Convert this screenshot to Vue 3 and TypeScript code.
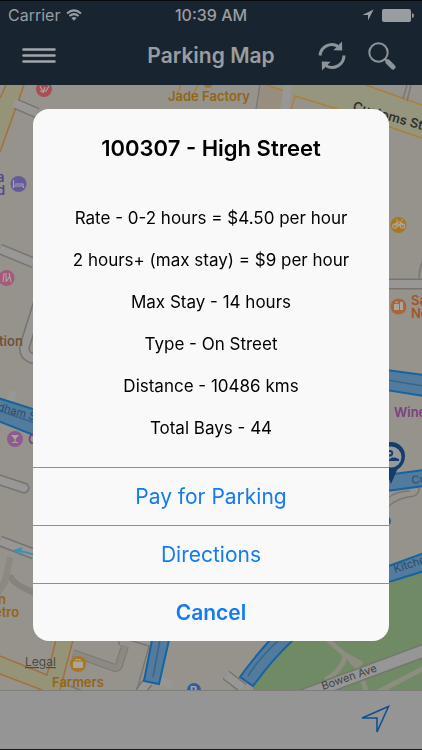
<script setup lang="ts">
import { ref } from 'vue'

interface Bay {
  id: string
  street: string
  details: string[]
}

const bay: Bay = {
  id: '100307',
  street: 'High Street',
  details: [
    'Rate - 0-2 hours = $4.50 per hour',
    '2 hours+ (max stay) = $9 per hour',
    'Max Stay - 14 hours',
    'Type - On Street',
    'Distance - 10486 kms',
    'Total Bays - 44',
  ],
}

const open = ref(true)
const close = (): void => {
  open.value = false
}
</script>

<template>
  <div class="app">
    <header class="header">
      <div class="status">
        <div class="status-side">
          <span>Carrier</span>
          <svg class="wifi" viewBox="0 0 16 12" aria-hidden="true">
            <path d="M1 4.4Q8 -1.6 15 4.4" />
            <path d="M3.4 7Q8 3.2 12.6 7" />
            <path class="solid" d="M5.4 9Q8 7 10.6 9L8 11.7Z" />
          </svg>
        </div>
        <span class="clock">10:39 AM</span>
        <div class="status-side end">
          <svg class="locate" viewBox="0 0 12 12" aria-hidden="true"><path d="M11.6 .4L.4 6H6V11.6Z" /></svg>
          <svg class="battery" viewBox="0 0 32 13" aria-hidden="true">
            <rect width="29" height="13" rx="2" />
            <path d="M30 4Q32 4.5 32 6.5T30 9Z" />
          </svg>
        </div>
      </div>
      <nav class="bar">
        <div class="bar-side">
          <button class="menu-button" type="button" aria-label="Menu">
            <svg width="34" height="18" viewBox="0 0 34 18"><path class="menu" d="M1.5 2.500H32.5M1.5 8.500H32.5M1.5 14.500H32.5" /></svg>
          </button>
        </div>
        <h1>Parking Map</h1>
        <div class="bar-side end">
          <button type="button" aria-label="Refresh">
            <svg width="28" height="30" viewBox="0 0 28 30">
              <path class="arc" d="M2 14.5A12 12 0 0 1 20 5.2M26 14.5A12 12 0 0 1 8 24.8" />
              <path class="tip" d="M24 .6L24.2 9.4L15.4 9.2ZM4 29.4L3.8 20.6L12.6 20.8Z" />
            </svg>
          </button>
          <button type="button" aria-label="Search">
            <svg width="28" height="28" viewBox="0 0 28 28">
              <circle class="lens" cx="10.5" cy="10.5" r="9.2" />
              <path class="neck" d="M16.5 16.5L20 20" />
              <path class="handle" d="M20 20L25 25" />
            </svg>
          </button>
        </div>
      </nav>
    </header>

    <main class="map">
      <svg class="map-art" viewBox="0 85 422 605" preserveAspectRatio="xMidYMid slice" role="img" aria-label="Map">
        <rect class="land" y="85" width="422" height="605" />

        <!-- parks -->
        <path class="park" d="M422 566L389 584L292 641L253 686V690H422Z" />
        <path class="trail" d="M328 640L345 655Q343 670 325 680M345 655L362 664M348 657L358 668L366 690M378 692L424 668" />

        <!-- arterial roads -->
        <path class="major" d="M6 85L0 98V152L24 85Z" />
        <path class="edge" d="M6 85L0 98M24 85L0 152" />
        <path class="tan" d="M262 85H267L285 91L281 110H258Z" />
        <path class="major pale" d="M267 85H362L422 105V138L389 128L295 96Z" />
        <path class="edge gold" d="M267 85L285 91L281 110M291 110L295 96L340 110L422 138M366 85L422 105" />
        <path class="major" d="M0 656L47 675L55 640H73L60 690H42L0 674Z" />
        <path class="edge" d="M0 656L47 675L56 640M73 640L60 690M0 674L42 690" />

        <!-- side streets -->
        <g class="casing">
          <path d="M16 104L37 113M0 249L34 263M38 304L25 345Q22 357 36 359M0 541L34 554" />
          <path d="M-6 478L24 488" stroke-linecap="round" />
          <path d="M388 284H424M226 675L243 688M148 682L140 692" />
        </g>
        <g class="street">
          <path d="M14 103L37 113M0 249L34 263M38 304L25 345Q22 357 36 359M0 541L34 554" />
          <path d="M-6 478L24 488" stroke-linecap="round" />
          <path d="M388 284H424M226 675L243 688M148 682L140 692M159 681L172 684" />
          <path d="M13 391L10 401M288 85L284 110" />
        </g>
        <path class="avenue-edge" d="M294 699L426 650" />
        <path class="avenue" d="M294 699L426 650" />
        <g class="lane-edge">
          <path d="M73 653L115 668Q119 668 120 662L125 646" />
          <path d="M10 558L5 582L-3 594M10 575Q12 584 35 593" />
        </g>
        <g class="lane">
          <path d="M73 653L115 668Q119 668 120 662L125 646" />
          <path d="M10 557L5 582L-3 594" />
        </g>
        <path class="thin" d="M129 640L149 646L137 690M70 686L85 692M119 641V645M388 507Q396 498 414 496Q419 494 419 488M388 498Q396 491 410 491M407 85L403 99M411 85L407 101M419 278Q419 268 424 258M260 85L256 110" />
        <path class="edge gold" d="M181 85L177 94M198 85L194 93" />
        <path class="gold-dot" d="M204 85A4 3 0 0 0 212 85Z" />

        <!-- bays for parking -->
        <g class="bay">
          <path d="M-2 398L36 410V436L-2 421Z" />
          <path d="M386 370L424 375V396L386 390Z" />
          <path d="M386 475L424 470V486L386 491Z" />
          <path d="M386 567L424 553V571L386 583Z" />
          <path d="M152 640H169L159 684L144 681Z" />
          <path d="M270 640H293Q272 660 253 686L240 677Q252 660 270 640Z" />
        </g>
        <path class="bay-line" d="M0 411L35 423M387 380L423 386M160 640L153 677M279 640Q260 657 248 676" />
        <path class="oneway" d="M36 555L20 551" />
        <path class="oneway-tip" d="M23 547L13 550L21 556L20 552Z" />

        <!-- points of interest -->
        <g>
          <circle class="rose" cx="44" cy="89" r="8" />
          <path class="glyph-line" d="M40 86L42 90L46 91L49 86M43 93L45 87M40 91L43 92" />
          <circle class="violet" cx="18.500" cy="184" r="8" />
          <path class="glyph-line" d="M13.500 180V188M13.500 186H23.500V188M15 184H23V185" />
          <circle class="pink" cx="6.500" cy="278" r="8" />
          <path class="glyph-line" d="M4 273L3 282M6 273V282M9 273L11 282M9 277L7 281" />
          <circle class="orchid" cx="15" cy="439" r="8" />
          <path class="glyph" d="M11 435H19L15.600 439V442H18V443H12V442H14.400V439Z" />
          <circle class="amber" cx="398.500" cy="225" r="8" />
          <path class="glyph-line" d="M395 226L397 222L401 222L403 226M397 222L399 226L401 222M396 220H398M401 220H403" />
          <circle class="glyph-line" cx="395" cy="226" r="2.200" />
          <circle class="glyph-line" cx="402.500" cy="226" r="2.200" />
          <circle class="orange" cx="398.500" cy="306.500" r="8" />
          <path class="glyph" d="M394 304H399V310H394ZM400 302H403V310H400ZM395 303L397 301L398 303Z" />
          <circle class="amber" cx="78" cy="664" r="8" />
          <rect class="glyph" x="73" y="661.500" width="10" height="6.500" rx="1" />
          <path class="glyph-line" d="M76 661V659.500H80V661" />
          <circle class="blue" cx="194" cy="690" r="7" />
          <circle class="blue" cx="386" cy="521" r="5" />
        </g>
        <path class="pin" d="M391 484L385 469Q377 465 377 456A14 14 0 0 1 405 456Q405 465 397 470Z" />
        <circle class="pin-face" cx="391" cy="457" r="10.500" />
        <path class="pin-mark" d="M386 451H390A2.200 2.200 0 0 1 390 455.500H386" />
        <path class="pin-car" d="M389 459.500L392 457.500H395L399 459V461H389Z" />

        <!-- labels -->
        <g class="label">
          <text class="t-gold" x="168" y="101">Jade Factory</text>
          <text class="t-violet" x="-3" y="182">a</text>
          <text class="t-violet" x="-3" y="195">d</text>
          <text class="t-brown" x="-1" y="346">tion</text>
          <text class="t-orchid" x="28" y="444">C</text>
          <text class="t-gold" x="-2" y="604">n</text>
          <text class="t-gold" x="-6" y="617">etro</text>
          <text class="t-orange" x="411" y="305">Sa</text>
          <text class="t-orange" x="411" y="318">No</text>
          <text class="t-orchid" x="394" y="417">Wine</text>
          <text class="t-gold" x="52" y="687">Farmers</text>
          <text class="t-white" x="190" y="694">P</text>
          <text class="t-dark" transform="translate(352 110) rotate(16)">Customs St</text>
        </g>
        <g class="road-label">
          <text class="t-navy" transform="translate(-3 410) rotate(16)">dham S</text>
          <text class="t-navy" transform="translate(412 484) rotate(-7)">Cu</text>
          <text class="t-navy" transform="translate(395 573) rotate(-18)">Kitche</text>
          <text class="t-slate" transform="translate(323 690) rotate(-19)">Bowen Ave</text>
        </g>
        <a href="#legal"><text class="legal" x="25" y="666">Legal</text></a>
      </svg>
    </main>

    <footer class="toolbar">
      <button type="button" aria-label="Show my location">
        <svg width="30" height="30" viewBox="0 0 30 30"><path class="compass" d="M28.500 1.500L2 13H17V27Z" /></svg>
      </button>
    </footer>

    <div v-if="open" class="backdrop">
      <section class="dialog" role="dialog" aria-modal="true" aria-labelledby="bay-title">
        <div class="body">
          <h2 id="bay-title">{{ bay.id }} - {{ bay.street }}</h2>
          <p v-for="line in bay.details" :key="line">{{ line }}</p>
        </div>
        <button class="action" type="button">Pay for Parking</button>
        <button class="action" type="button">Directions</button>
        <button class="action strong" type="button" @click="close">Cancel</button>
      </section>
    </div>
  </div>
</template>

<style>
body {
  margin: 0;
}
</style>

<style scoped>
.app {
  display: flex;
  flex-direction: column;
  height: 100vh;
  font-family: Inter, "Liberation Sans", sans-serif;
  background: #96938d;
}
button {
  margin: 0;
  padding: 0;
  border: 0;
  background: none;
  font: inherit;
  cursor: pointer;
}
svg {
  display: block;
}

.header {
  box-sizing: border-box;
  height: 85px;
  border-top: 1px solid #05090d;
  background: #182530;
  color: #9a9da0;
}
.status {
  display: flex;
  align-items: center;
  height: 28px;
  padding: 0 8px;
  font-size: 16px;
}
.status-side {
  display: flex;
  flex: 1;
  align-items: center;
  gap: 6px;
}
.status-side.end {
  gap: 8px;
}
.end {
  justify-content: flex-end;
}
.clock {
  font-weight: 500;
}
.wifi {
  width: 16px;
  height: 12px;
  fill: none;
  stroke: #9a9da0;
  stroke-width: 2;
}
.wifi .solid {
  fill: #9a9da0;
  stroke: none;
}
.locate {
  width: 12px;
  height: 12px;
  fill: #9a9da0;
}
.battery {
  width: 32px;
  height: 13px;
  fill: #9a9da0;
}
.bar {
  display: flex;
  align-items: center;
  height: 54px;
  padding: 0 26px;
}
.bar-side {
  display: flex;
  flex: 1;
  align-items: center;
  gap: 22px;
}
.menu-button {
  margin-left: -4px;
}
h1 {
  margin: 0;
  font-size: 21px;
  font-weight: 600;
  line-height: 28px;
}
.menu {
  stroke: #a3a6a8;
  stroke-width: 2.6;
  stroke-linecap: round;
}
.arc {
  fill: none;
  stroke: #8d9499;
  stroke-width: 3;
}
.tip {
  fill: #8d9499;
}
.lens {
  fill: none;
  stroke: #8d9499;
  stroke-width: 2;
}
.neck {
  stroke: #8d9499;
  stroke-width: 2.4;
}
.handle {
  stroke: #8d9499;
  stroke-width: 5;
  stroke-linecap: round;
}

.map {
  flex: 1;
  min-height: 0;
}
.map-art {
  width: 100%;
  height: 100%;
}
.land { fill: #96938d; }
.park { fill: #6f8a64; }
.trail { fill: none; stroke: #8d8d80; stroke-width: 5; }
.major { fill: #959478; }
.pale { fill: #96967f; }
.tan { fill: #978e80; }
.edge { fill: none; stroke: #a3703c; stroke-width: 1.5; }
.gold { stroke: #ab8038; }
.gold-dot { fill: #a87721; }
.casing { fill: none; stroke: #77736e; stroke-width: 11; }
.street { fill: none; stroke: #989795; stroke-width: 8; }
.avenue-edge { stroke: #747770; stroke-width: 14; }
.avenue { stroke: #979696; stroke-width: 11; }
.lane-edge { fill: none; stroke: #7d7973; stroke-width: 8; }
.lane { fill: none; stroke: #8c8982; stroke-width: 6; }
.lane-edge path:last-child { stroke-width: 6; stroke: #86827c; }
.thin { fill: none; stroke: #7b7772; stroke-width: 1.5; }
.bay { fill: #527b9d; stroke: #17639f; stroke-width: 2; }
.bay-line { fill: none; stroke: #386589; stroke-width: 1.5; }
.oneway { fill: none; stroke: #3f8fb0; stroke-width: 2; }
.oneway-tip { fill: #3f8fb0; }
.rose { fill: #a94d57; }
.violet { fill: #645b9d; }
.pink { fill: #a45a7c; }
.orchid { fill: #8f5992; }
.amber { fill: #a87721; }
.orange { fill: #ac653a; }
.blue { fill: #335d9d; }
.glyph { fill: #aaa59d; }
.glyph-line { fill: none; stroke: #aaa59d; stroke-width: 1.2; }
.pin { fill: #153d6c; }
.pin-face { fill: #969a9d; }
.pin-mark { fill: none; stroke: #153d6c; stroke-width: 1.8; }
.pin-car { fill: #153d6c; }
.label {
  font-size: 13px;
  font-weight: 600;
}
.road-label {
  font-size: 11px;
}
.t-gold { fill: #936515; }
.t-violet { fill: #53498c; }
.t-brown { fill: #71513a; }
.t-orchid { fill: #78427d; }
.t-orange { fill: #a65327; }
.t-white { fill: #a6abb2; font-size: 11px; }
.t-dark { fill: #303030; }
.t-navy { fill: #2b4c69; }
.t-slate { fill: #41443f; }
.legal {
  fill: #4b4a48;
  font-size: 12px;
  text-decoration: underline;
}

.toolbar {
  display: flex;
  box-sizing: border-box;
  align-items: center;
  justify-content: flex-end;
  height: 60px;
  padding: 0 32px;
  border-top: 1px solid #7f7e7c;
  border-bottom: 1px solid #1c1c1c;
  background: #959595;
}
.compass {
  fill: none;
  stroke: #114f91;
  stroke-width: 1.6;
}

.backdrop {
  position: fixed;
  inset: 0;
  display: flex;
  align-items: center;
  justify-content: center;
  padding: 0 33px;
}
.dialog {
  flex: 1;
  max-width: 420px;
  overflow: hidden;
  border-radius: 16px;
  background: #f9f9f9;
}
.body {
  padding: 24px 16px;
  color: #000;
  text-align: center;
}
h2 {
  margin: 0 0 43px;
  font-size: 22px;
  font-weight: 600;
  line-height: 30px;
}
p {
  margin: 0 0 18px;
  font-size: 17px;
  line-height: 24px;
}
p:last-child {
  margin-bottom: 3px;
}
.action {
  display: block;
  width: 100%;
  border-top: 1px solid #8f8f93;
  color: #147bf0;
  font-size: 21px;
  line-height: 57px;
}
.strong {
  font-weight: 600;
}
</style>
